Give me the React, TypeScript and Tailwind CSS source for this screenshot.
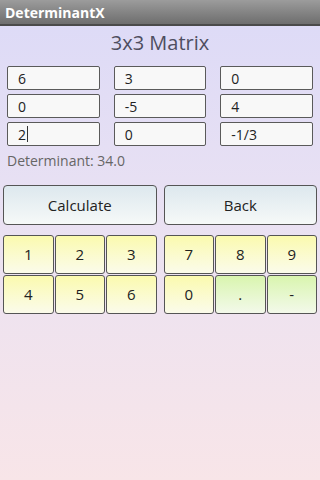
import { useState } from "react"

const matrix = [
  ["6", "3", "0"],
  ["0", "-5", "4"],
  ["2", "0", "-1/3"],
]

function Key({ label, green }: { label: string; green?: boolean }) {
  return (
    <button
      className={`h-[39px] flex-1 rounded-[3px] border-[1.5px] border-[#555] text-[15px] text-[#222] ${
        green
          ? "bg-gradient-to-b from-[#d9f5ae] to-[#f3f9ea]"
          : "bg-gradient-to-b from-[#fbfaae] to-[#fbfbea]"
      }`}
    >
      {label}
    </button>
  )
}

export default function App() {
  const [cells] = useState(matrix)

  return (
    <div
      className="flex h-[480px] w-[320px] flex-col overflow-hidden bg-gradient-to-b from-[#dcdaf7] via-[#ebe2f2] to-[#f8e5e8]"
      style={{ fontFamily: '"Open Sans", "DejaVu Sans", sans-serif' }}
    >
      <div className="flex h-[26px] items-center border-b-2 border-[#4a4a4a] bg-gradient-to-b from-[#9c9c9c] to-[#6e6e6e] px-[5px]">
        <span className="text-[14px] font-bold text-white">DeterminantX</span>
      </div>

      <h1 className="mt-[4px] text-center text-[20px] leading-[26px] text-[#4e4e60]">3x3 Matrix</h1>

      <div className="mt-[10px] flex flex-col gap-[4px] px-[7px]">
        {cells.map((row, i) => (
          <div key={i} className="flex gap-[14px]">
            {row.map((v, j) => (
              <div
                key={j}
                className="flex h-[24px] w-[93px] items-center rounded-[2px] border-[1.5px] border-[#5a5a5a] bg-[#f8f8f8] pl-[10px] text-[14px] text-[#222]"
              >
                {v}
                {i === 2 && j === 0 && <span className="ml-[1px] h-[16px] w-[1px] bg-[#333]" />}
              </div>
            ))}
          </div>
        ))}
      </div>

      <div className="mt-[4px] px-[7px] text-[14px] text-[#666]">Determinant: 34.0</div>

      <div className="mt-[14px] flex gap-[7px] px-[3px]">
        <button className="h-[40px] flex-1 rounded-[4px] border-[1.5px] border-[#555] bg-gradient-to-b from-[#dde8ee] to-[#f6f9f8] text-[15px] text-[#222]">
          Calculate
        </button>
        <button className="h-[40px] flex-1 rounded-[4px] border-[1.5px] border-[#555] bg-gradient-to-b from-[#dde8ee] to-[#f6f9f8] text-[15px] text-[#222]">
          Back
        </button>
      </div>

      <div className="mt-[10px] flex gap-[7px] px-[3px]">
        <div className="flex flex-1 flex-col gap-[1px]">
          <div className="flex gap-[1px]">
            <Key label="1" />
            <Key label="2" />
            <Key label="3" />
          </div>
          <div className="flex gap-[1px]">
            <Key label="4" />
            <Key label="5" />
            <Key label="6" />
          </div>
        </div>
        <div className="flex flex-1 flex-col gap-[1px]">
          <div className="flex gap-[1px]">
            <Key label="7" />
            <Key label="8" />
            <Key label="9" />
          </div>
          <div className="flex gap-[1px]">
            <Key label="0" />
            <Key label="." green />
            <Key label="-" green />
          </div>
        </div>
      </div>
    </div>
  )
}
